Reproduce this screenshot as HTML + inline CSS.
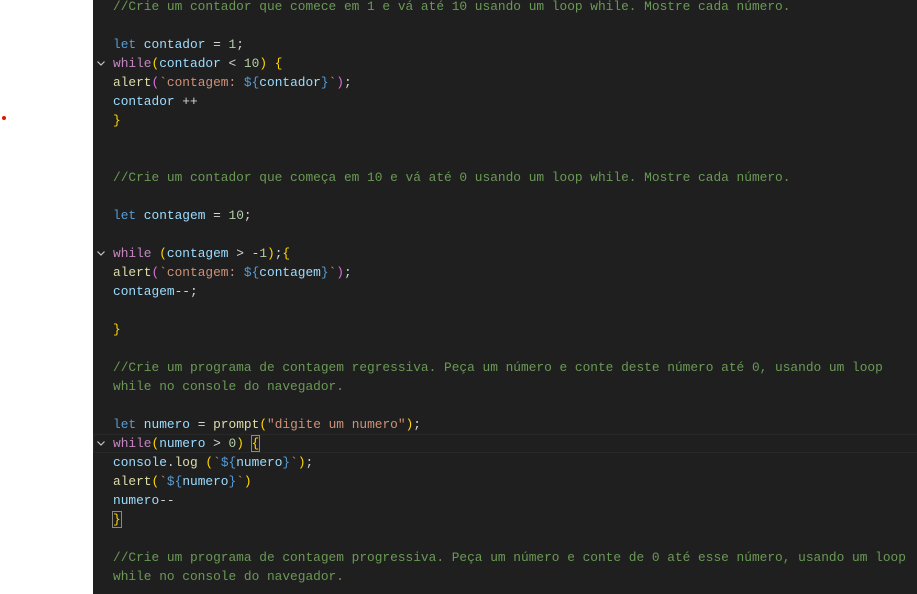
<!DOCTYPE html><html><head><meta charset="utf-8"><style>
body{margin:0;width:917px;height:594px;background:#fff;overflow:hidden;position:relative}
#ed{position:absolute;left:93px;top:0;width:824px;height:594px;background:#1f1f1f}
.l{position:absolute;left:20px;height:19px;line-height:19px;font-family:"Liberation Mono",monospace;font-size:12.84px;color:#9cdcfe;white-space:pre;margin-top:-1px}
.c{color:#6a9955}.k{color:#569cd6}.p{color:#c586c0}.f{color:#dcdcaa}.n{color:#b5cea8}.s{color:#ce9178}.o{color:#d4d4d4}
.y{color:#ffd700}.m{color:#da70d6}.b{color:#179fff}
.fold{position:absolute;left:3px;width:10px;height:19px}
.hl{position:absolute;left:0;width:824px;height:17px;border:1px solid #282828}
.bx{outline:1px solid #888;}
</style></head><body>
<div style="position:absolute;left:2px;top:116px;width:4px;height:4px;border-radius:50%;background:#e51400"></div>
<div id="ed">
<div class="hl" style="top:434px"></div>
<svg class="fold" style="top:54px" viewBox="0 0 10 19"><path d="M1.5 7.5L5 11L8.5 7.5" stroke="#c5c5c5" fill="none" stroke-width="1.2"/></svg>
<svg class="fold" style="top:244px" viewBox="0 0 10 19"><path d="M1.5 7.5L5 11L8.5 7.5" stroke="#c5c5c5" fill="none" stroke-width="1.2"/></svg>
<svg class="fold" style="top:434px" viewBox="0 0 10 19"><path d="M1.5 7.5L5 11L8.5 7.5" stroke="#c5c5c5" fill="none" stroke-width="1.2"/></svg>
<div class="l c" style="top:-2px">//Crie um contador que comece em 1 e vá até 10 usando um loop while. Mostre cada número.</div>
<div class="l" style="top:36px"><span class="k">let</span> contador <span class="o">=</span> <span class="n">1</span><span class="o">;</span></div>
<div class="l" style="top:55px"><span class="p">while</span><span class="y">(</span>contador <span class="o">&lt;</span> <span class="n">10</span><span class="y">)</span> <span class="y">{</span></div>
<div class="l" style="top:74px"><span class="f">alert</span><span class="m">(</span><span class="s">`contagem: </span><span class="k">${</span>contador<span class="k">}</span><span class="s">`</span><span class="m">)</span><span class="o">;</span></div>
<div class="l" style="top:93px">contador <span class="o">++</span></div>
<div class="l" style="top:112px"><span class="y">}</span></div>
<div class="l c" style="top:169px">//Crie um contador que começa em 10 e vá até 0 usando um loop while. Mostre cada número.</div>
<div class="l" style="top:207px"><span class="k">let</span> contagem <span class="o">=</span> <span class="n">10</span><span class="o">;</span></div>
<div class="l" style="top:245px"><span class="p">while</span> <span class="y">(</span>contagem <span class="o">&gt;</span> <span class="o">-</span><span class="n">1</span><span class="y">)</span><span class="o">;</span><span class="y">{</span></div>
<div class="l" style="top:264px"><span class="f">alert</span><span class="m">(</span><span class="s">`contagem: </span><span class="k">${</span>contagem<span class="k">}</span><span class="s">`</span><span class="m">)</span><span class="o">;</span></div>
<div class="l" style="top:283px">contagem<span class="o">--;</span></div>
<div class="l" style="top:321px"><span class="y">}</span></div>
<div class="l c" style="top:359px">//Crie um programa de contagem regressiva. Peça um número e conte deste número até 0, usando um loop</div>
<div class="l c" style="top:378px">while no console do navegador.</div>
<div class="l" style="top:416px"><span class="k">let</span> numero <span class="o">=</span> <span class="f">prompt</span><span class="y">(</span><span class="s">"digite um numero"</span><span class="y">)</span><span class="o">;</span></div>
<div class="l" style="top:435px"><span class="p">while</span><span class="y">(</span>numero <span class="o">&gt;</span> <span class="n">0</span><span class="y">)</span> <span class="y bx">{</span></div>
<div class="l" style="top:454px">console<span class="o">.</span><span class="f">log</span> <span class="y">(</span><span class="s">`</span><span class="k">${</span>numero<span class="k">}</span><span class="s">`</span><span class="y">)</span><span class="o">;</span></div>
<div class="l" style="top:473px"><span class="f">alert</span><span class="y">(</span><span class="s">`</span><span class="k">${</span>numero<span class="k">}</span><span class="s">`</span><span class="y">)</span></div>
<div class="l" style="top:492px">numero<span class="o">--</span></div>
<div class="l" style="top:511px"><span class="y bx">}</span></div>
<div class="l c" style="top:549px">//Crie um programa de contagem progressiva. Peça um número e conte de 0 até esse número, usando um loop</div>
<div class="l c" style="top:568px">while no console do navegador.</div>
</div>
</body></html>
